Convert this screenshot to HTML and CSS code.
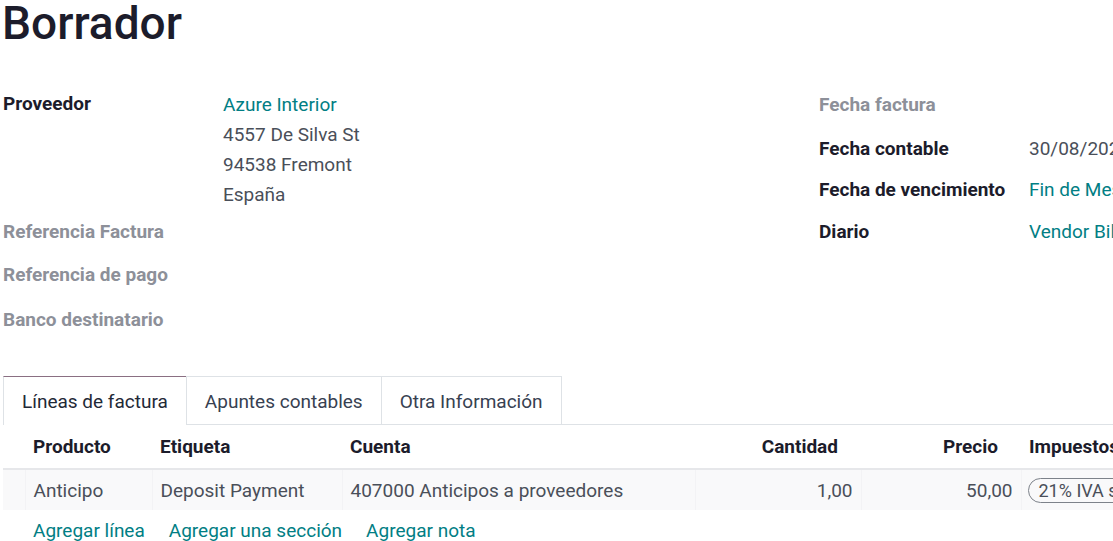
FILE: index.html
```html
<!DOCTYPE html>
<html lang="es">
<head>
    <meta charset="UTF-8">
    <meta name="viewport" content="width=device-width, initial-scale=1.0">
    <title>Factura de proveedor - Borrador</title>
    <link rel="stylesheet" href="styles.css">
</head>
<body>

    <div class="sheet">
        <h1 class="title">Borrador</h1>

        <div class="groups">
            <div class="group group-left">
                <div class="row row-partner">
                    <div class="label">Proveedor</div>
                    <div class="value address">
                        <a href="#" class="link">Azure Interior</a>
                        <span>4557 De Silva St</span>
                        <span>94538 Fremont</span>
                        <span>España</span>
                    </div>
                </div>
                <div class="row row-ref">
                    <div class="label muted">Referencia Factura</div>
                    <div class="value"></div>
                </div>
                <div class="row row-pay">
                    <div class="label muted">Referencia de pago</div>
                    <div class="value"></div>
                </div>
                <div class="row row-bank">
                    <div class="label muted">Banco destinatario</div>
                    <div class="value"></div>
                </div>
            </div>

            <div class="group group-right">
                <div class="row r1">
                    <div class="label muted">Fecha factura</div>
                    <div class="value"></div>
                </div>
                <div class="row r2">
                    <div class="label">Fecha contable</div>
                    <div class="value">30/08/2024</div>
                </div>
                <div class="row r3">
                    <div class="label">Fecha de vencimiento</div>
                    <div class="value"><a href="#" class="link">Fin de Mes</a></div>
                </div>
                <div class="row r4">
                    <div class="label">Diario</div>
                    <div class="value"><a href="#" class="link">Vendor Bills</a></div>
                </div>
            </div>
        </div>

        <ul class="tabs">
            <li class="tab active">Líneas de factura</li>
            <li class="tab">Apuntes contables</li>
            <li class="tab">Otra Información</li>
        </ul>

        <table class="lines">
            <thead>
                <tr>
                    <th class="handle"></th>
                    <th class="c-product">Producto</th>
                    <th class="c-label">Etiqueta</th>
                    <th class="c-account">Cuenta</th>
                    <th class="c-qty num">Cantidad</th>
                    <th class="c-price num">Precio</th>
                    <th class="c-tax">Impuestos</th>
                </tr>
            </thead>
            <tbody>
                <tr class="line">
                    <td class="handle"></td>
                    <td>Anticipo</td>
                    <td>Deposit Payment</td>
                    <td>407000 Anticipos a proveedores</td>
                    <td class="num">1,00</td>
                    <td class="num">50,00</td>
                    <td><span class="tag">21% IVA soportado</span></td>
                </tr>
                <tr class="add-row">
                    <td class="handle"></td>
                    <td colspan="6">
                        <div class="add-links">
                            <a href="#" class="link">Agregar línea</a>
                            <a href="#" class="link">Agregar una sección</a>
                            <a href="#" class="link">Agregar nota</a>
                        </div>
                    </td>
                </tr>
            </tbody>
        </table>
    </div>

</body>
</html>
```

FILE: styles.css
```css
body {
    margin: 0;
    font-family: Roboto, "Noto Sans", sans-serif;
    font-size: 19px;
    color: #4a4f59;
    background-color: #fff;
    overflow: hidden;
}

.sheet {
    width: 1300px;
    padding-left: 3px;
}

.title {
    margin: 0 0 36px -1px;
    font-size: 46px;
    line-height: 46px;
    font-weight: 500;
    color: #1c1c2b;
}

.link {
    color: #017e84;
    text-decoration: none;
}

.groups {
    display: grid;
    grid-template-columns: 816px 1fr;
}

.row {
    display: grid;
    align-items: center;
}

.group-left .row {
    grid-template-columns: 220px 1fr;
}

.group-right .row {
    grid-template-columns: 210px 1fr;
}

.label {
    font-weight: 700;
    color: #1c1c2b;
}

.label.muted {
    color: #8d9099;
}

.row-partner {
    align-items: start;
    padding-top: 8px;
}

.row-partner .label {
    line-height: 28px;
}

.address {
    display: flex;
    flex-direction: column;
    line-height: 30px;
}

.row-ref { height: 42px; }
.row-pay { height: 45px; }
.row-bank { height: 45px; }

.r1 { height: 44px; }
.r2 { height: 44px; }
.r3 { height: 38px; }
.r4 { height: 46px; }

.tabs {
    display: flex;
    list-style: none;
    margin: 34px 0 0;
    padding: 0;
    border-bottom: 1px solid #dee2e6;
}

.tab {
    height: 47px;
    line-height: 49px;
    padding: 0 18px;
    border: 1px solid #dee2e6;
    border-bottom: none;
    margin-bottom: -1px;
    margin-right: -1px;
    color: #374151;
    background-color: #fff;
}

.tab.active {
    border-top-color: #8a6f82;
    height: 48px;
    color: #1f2937;
}

.lines {
    border-collapse: collapse;
    table-layout: fixed;
    width: 1300px;
}

.lines th,
.lines td {
    box-sizing: border-box;
    padding: 0 8px;
    text-align: left;
    white-space: nowrap;
    overflow: hidden;
}

.lines th {
    height: 44px;
    font-weight: 700;
    color: #1c1c2b;
    border-bottom: 2px solid #e6e7ea;
}

.handle { width: 22px; }
.c-product { width: 127px; }
.c-label { width: 190px; }
.c-account { width: 353px; }
.c-qty { width: 166px; }
.c-price { width: 160px; }

.lines th.num {
    text-align: right;
    padding-right: 23px;
}

.lines td.num {
    text-align: right;
}

.line td {
    height: 41px;
    background-color: #f9f9fa;
    border-left: 1px solid #f3f3f5;
}

.line td.handle {
    border-left: none;
}

.lines td .tag {
    display: inline-block;
    padding: 0 10px;
    border: 1px solid #7d828a;
    border-radius: 13px;
    line-height: 23px;
    font-size: 18px;
    color: #4a4f59;
    margin-left: -2px;
}

.add-row td {
    height: 40px;
}

.add-links {
    display: flex;
    gap: 24px;
}
```
